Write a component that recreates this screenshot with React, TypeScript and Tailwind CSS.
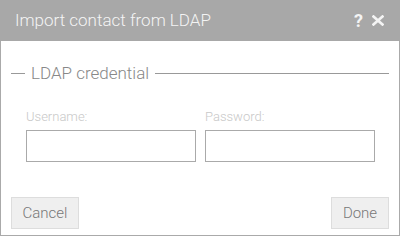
import * as React from 'react';

function CloseIcon() {
	return (
		<svg width="12" height="11" viewBox="0 0 12 11" className="block">
			<path d="M1.5 1.5 L10.5 9.5 M10.5 1.5 L1.5 9.5" stroke="#f4f4f4" strokeWidth="2.6" strokeLinecap="square" />
		</svg>
	);
}

function Field({ label, type }: { label: string; type: string }) {
	return (
		<div className="flex flex-col">
			<label className="text-[13px] leading-[14px] text-[#c8c8c8] font-light">{label}</label>
			<input
				type={type}
				className="mt-[6px] w-[170px] h-[32px] border border-[#aaaaaa] bg-white outline-none"
			/>
		</div>
	);
}

export default function App() {
	return (
		<div
			className="w-[400px] h-[236px] flex flex-col bg-white border border-[#aaaaaa]"
			style={{ fontFamily: 'Roboto, "Liberation Sans", sans-serif' }}
		>
			<div className="h-[41px] -mx-px -mt-px bg-[#a8a8a8] flex items-center justify-between pl-[15px] pr-[16px] shrink-0">
				<span className="text-[17px] font-light text-[#f4f4f4]">Import contact from LDAP</span>
				<div className="flex items-center gap-[9px]">
					<span className="text-[18px] font-bold text-[#f4f4f4] leading-none">?</span>
					<CloseIcon />
				</div>
			</div>
			<div className="flex-1 flex flex-col px-[10px] pb-[6px]">
				<div className="mt-[22px] flex items-center h-[20px]">
					<div className="w-[14px] h-px bg-[#999999]" />
					<span className="mx-[6px] text-[17px] font-light leading-[20px] text-[#888888]">LDAP credential</span>
					<div className="flex-1 h-px bg-[#999999]" />
				</div>
				<div className="mt-[27px] ml-[15px] flex gap-[9px]">
					<Field label="Username:" type="text" />
					<Field label="Password:" type="password" />
				</div>
				<div className="mt-auto flex justify-between">
					<button className="w-[68px] h-[32px] bg-[#efefef] border border-[#dddddd] text-[15px] font-light text-[#777777]">Cancel</button>
					<button className="w-[58px] h-[32px] bg-[#efefef] border border-[#dddddd] text-[15px] font-light text-[#777777]">Done</button>
				</div>
			</div>
		</div>
	);
}
